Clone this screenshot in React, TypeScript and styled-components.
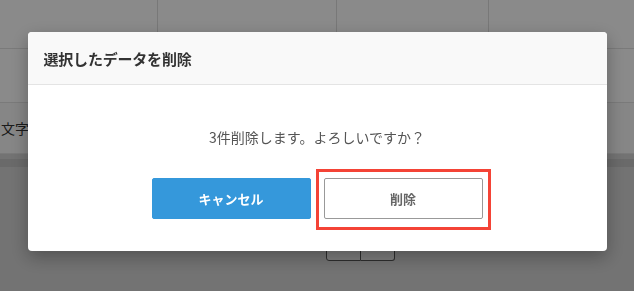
import React from 'react';
import styled, { createGlobalStyle } from 'styled-components';

const GlobalStyle = createGlobalStyle`
  html, body {
    margin: 0;
    padding: 0;
    height: 100%;
    overflow: hidden;
  }
  body {
    font-family: 'Noto Sans CJK JP', 'Noto Sans', sans-serif;
    background: #d4d4d4;
  }
`;

const Page = styled.div`
  width: 634px;
  height: 291px;
  display: flex;
  flex-direction: column;
  background: #d4d4d4;
`;

const TableRow = styled.div<{ $height: number; $bg?: string }>`
  display: grid;
  grid-template-columns: 158px 179px 152px 1fr;
  height: ${p => p.$height}px;
  background: ${p => p.$bg || '#fff'};
  border-bottom: 1px solid #e2e2e2;
  box-sizing: border-box;
`;

const Cell = styled.div<{ $lined?: boolean }>`
  border-right: ${p => (p.$lined ? '1px solid #dedede' : 'none')};
  font-size: 14px;
  color: #333;
  display: flex;
  align-items: center;
  padding-left: 1px;
`;

const ScrollBand = styled.div`
  height: 8px;
  margin-top: 5px;
  background: #c4c4c4;
`;

const Pager = styled.div`
  display: flex;
  justify-content: center;
  padding: 62px 0 0 86px;
`;

const PageButton = styled.div<{ $first?: boolean }>`
  width: 33px;
  height: 30px;
  border: 1px solid #555;
  border-left: ${p => (p.$first ? '1px solid #555' : 'none')};
  border-radius: ${p => (p.$first ? '0 0 0 3px' : '0 0 3px 0')};
  background: #e8e8e8;
`;

const Overlay = styled.div`
  position: fixed;
  inset: 0;
  background: rgba(0, 0, 0, 0.46);
  display: flex;
  justify-content: center;
  align-items: flex-start;
  padding-top: 32px;
  box-sizing: border-box;
`;

const Modal = styled.div`
  width: 579px;
  background: #fff;
  border-radius: 4px;
  box-shadow: 0 6px 18px rgba(0, 0, 0, 0.3);
`;

const ModalHeader = styled.div`
  height: 53px;
  box-sizing: border-box;
  background: #f9f9f9;
  border-bottom: 1px solid #e4e4e4;
  border-radius: 4px 4px 0 0;
  display: flex;
  align-items: center;
  padding: 0 16px;
`;

const Title = styled.h2`
  margin: 0;
  font-size: 15px;
  font-weight: 700;
  color: #333;
  letter-spacing: -0.2px;
`;

const ModalBody = styled.div`
  padding: 42px 0 32px;
  display: flex;
  flex-direction: column;
  align-items: center;
`;

const Message = styled.p`
  margin: 0;
  font-size: 14px;
  line-height: 20px;
  color: #555;
`;

const Actions = styled.div`
  margin-top: 31px;
  display: flex;
  gap: 13px;
`;

const Button = styled.button<{ $primary?: boolean }>`
  position: relative;
  width: 159px;
  height: 41px;
  border-radius: 2px;
  font-family: inherit;
  font-size: 13px;
  font-weight: 700;
  cursor: pointer;
  border: 1px solid ${p => (p.$primary ? '#3498db' : '#999')};
  background: ${p => (p.$primary ? '#3598db' : '#fff')};
  color: ${p => (p.$primary ? '#fff' : '#666')};
`;

const Highlight = styled.span`
  position: absolute;
  top: -10px;
  bottom: -12px;
  left: -9px;
  right: -9px;
  border: 3px solid #f44336;
  pointer-events: none;
`;

export default function App() {
  return (
    <>
      <GlobalStyle />
      <Page>
        <TableRow $height={49}>
          <Cell $lined />
          <Cell $lined />
          <Cell $lined />
          <Cell />
        </TableRow>
        <TableRow $height={54} />
        <TableRow $height={51} $bg="#f7f7f7">
          <Cell>文字</Cell>
        </TableRow>
        <ScrollBand />
        <Pager>
          <PageButton $first />
          <PageButton />
        </Pager>
      </Page>
      <Overlay>
        <Modal>
          <ModalHeader>
            <Title>選択したデータを削除</Title>
          </ModalHeader>
          <ModalBody>
            <Message>3件削除します。よろしいですか？</Message>
            <Actions>
              <Button $primary>キャンセル</Button>
              <Button>
                削除
                <Highlight />
              </Button>
            </Actions>
          </ModalBody>
        </Modal>
      </Overlay>
    </>
  );
}
